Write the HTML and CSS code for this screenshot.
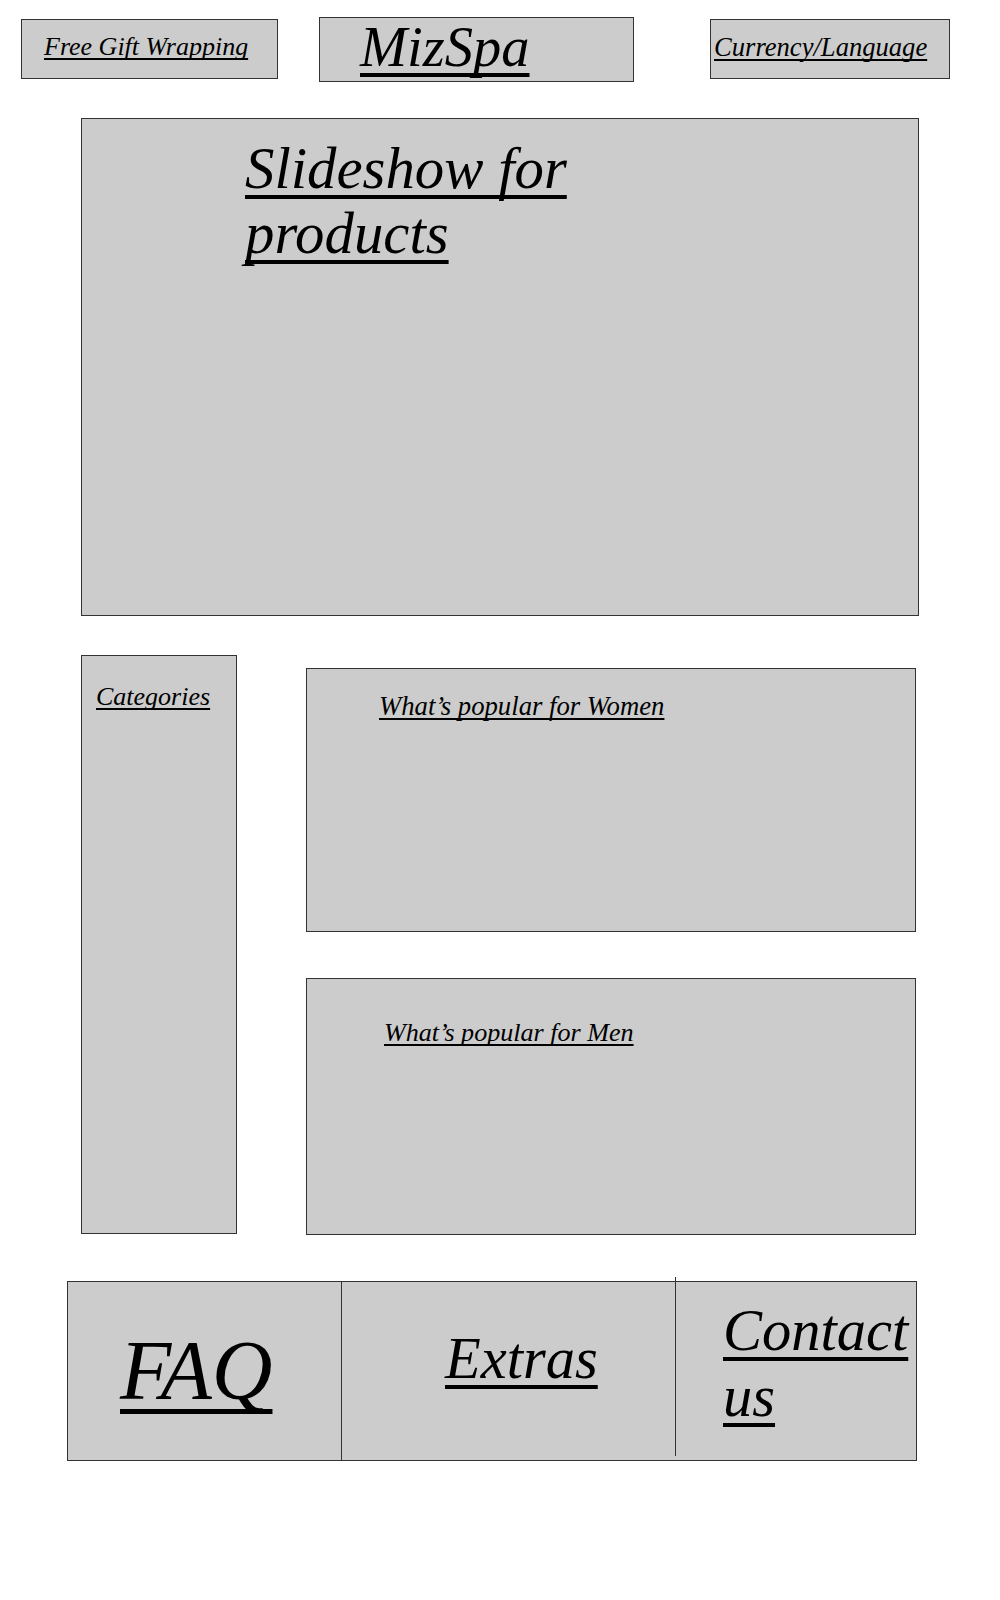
FILE: index.html
```html
<!DOCTYPE html>
<html>
<head>
<meta charset="utf-8">
<title>MizSpa</title>
<link rel="stylesheet" href="styles.css">
</head>
<body>
<header class="top">
  <div class="box gift"><a href="#">Free Gift Wrapping</a></div>
  <div class="box logo"><a href="#">MizSpa</a></div>
  <div class="box currency"><a href="#">Currency/Language</a></div>
</header>
<section class="box slideshow"><a href="#">Slideshow for products</a></section>
<main class="middle">
  <aside class="box categories"><a href="#">Categories</a></aside>
  <div class="popular">
    <section class="box women"><a href="#">What’s popular for Women</a></section>
    <section class="box men"><a href="#">What’s popular for Men</a></section>
  </div>
</main>
<footer class="footer">
  <div class="cell faq"><a href="#">FAQ</a></div>
  <div class="cell extras"><a href="#">Extras</a></div>
  <div class="cell contact"><a href="#">Contact us</a></div>
</footer>
</body>
</html>
```
FILE: styles.css
```css
html, body {
  margin: 0;
  padding: 0;
  background: #fff;
}
body {
  font-family: "Liberation Serif", serif;
  font-style: italic;
  width: 1000px;
  height: 1600px;
}
a {
  color: #000;
  text-decoration: underline;
  text-decoration-skip-ink: none;
  text-decoration-thickness: 2px;
  text-underline-offset: 0.12em;
}
.box {
  background: #cccccc;
  border: 1px solid #333;
  box-sizing: border-box;
}
.top {
  display: flex;
  align-items: flex-start;
  padding: 17px 0 0 21px;
}
.gift {
  width: 257px;
  height: 60px;
  margin-top: 2px;
  padding: 12px 0 0 22px;
  font-size: 26px;
}
.logo {
  width: 315px;
  height: 65px;
  margin-left: 41px;
  padding: 0 0 0 40px;
  font-size: 56.5px;
  line-height: 58px;
}
.logo a { text-decoration-thickness: 4px; }
.currency {
  width: 240px;
  height: 60px;
  margin-top: 2px;
  margin-left: 76px;
  padding: 12px 0 0 3px;
  font-size: 26.6px;
}
.slideshow {
  width: 838px;
  height: 498px;
  margin: 36px 0 0 81px;
  padding: 17px 320px 0 163px;
  font-size: 58.8px;
  line-height: 65px;
}
.slideshow a { text-decoration-thickness: 4px; }
.middle {
  display: flex;
  align-items: flex-start;
  margin: 39px 0 0 81px;
}
.categories {
  width: 156px;
  height: 579px;
  padding: 26px 0 0 14px;
  font-size: 26px;
}
.popular {
  display: flex;
  flex-direction: column;
  gap: 46px;
  margin: 13px 0 0 69px;
}
.women {
  width: 610px;
  height: 264px;
  padding: 22px 0 0 72px;
  font-size: 26.7px;
}
.men {
  width: 610px;
  height: 257px;
  padding: 39px 0 0 77px;
  font-size: 26.1px;
}
.footer {
  position: relative;
  display: grid;
  grid-template-columns: 274px 334px 1fr;
  width: 850px;
  height: 180px;
  margin: 46px 0 0 67px;
  background: #cccccc;
  border: 1px solid #333;
  box-sizing: border-box;
}
.cell {
  box-sizing: border-box;
}
.faq {
  border-right: 1px solid #333;
  padding: 40px 0 0 52px;
  font-size: 84px;
}
.faq a { text-decoration-thickness: 5px; }
.extras {
  padding: 43px 0 0 103px;
  font-size: 58.5px;
}
.extras a { text-decoration-thickness: 4px; }
.contact {
  position: relative;
  padding: 16px 0 0 47px;
  font-size: 58.5px;
  line-height: 66px;
}
.contact a { text-decoration-thickness: 4px; }
.contact::before {
  content: "";
  position: absolute;
  left: -1px;
  top: -5px;
  height: 179px;
  border-left: 1px solid #333;
}
```
